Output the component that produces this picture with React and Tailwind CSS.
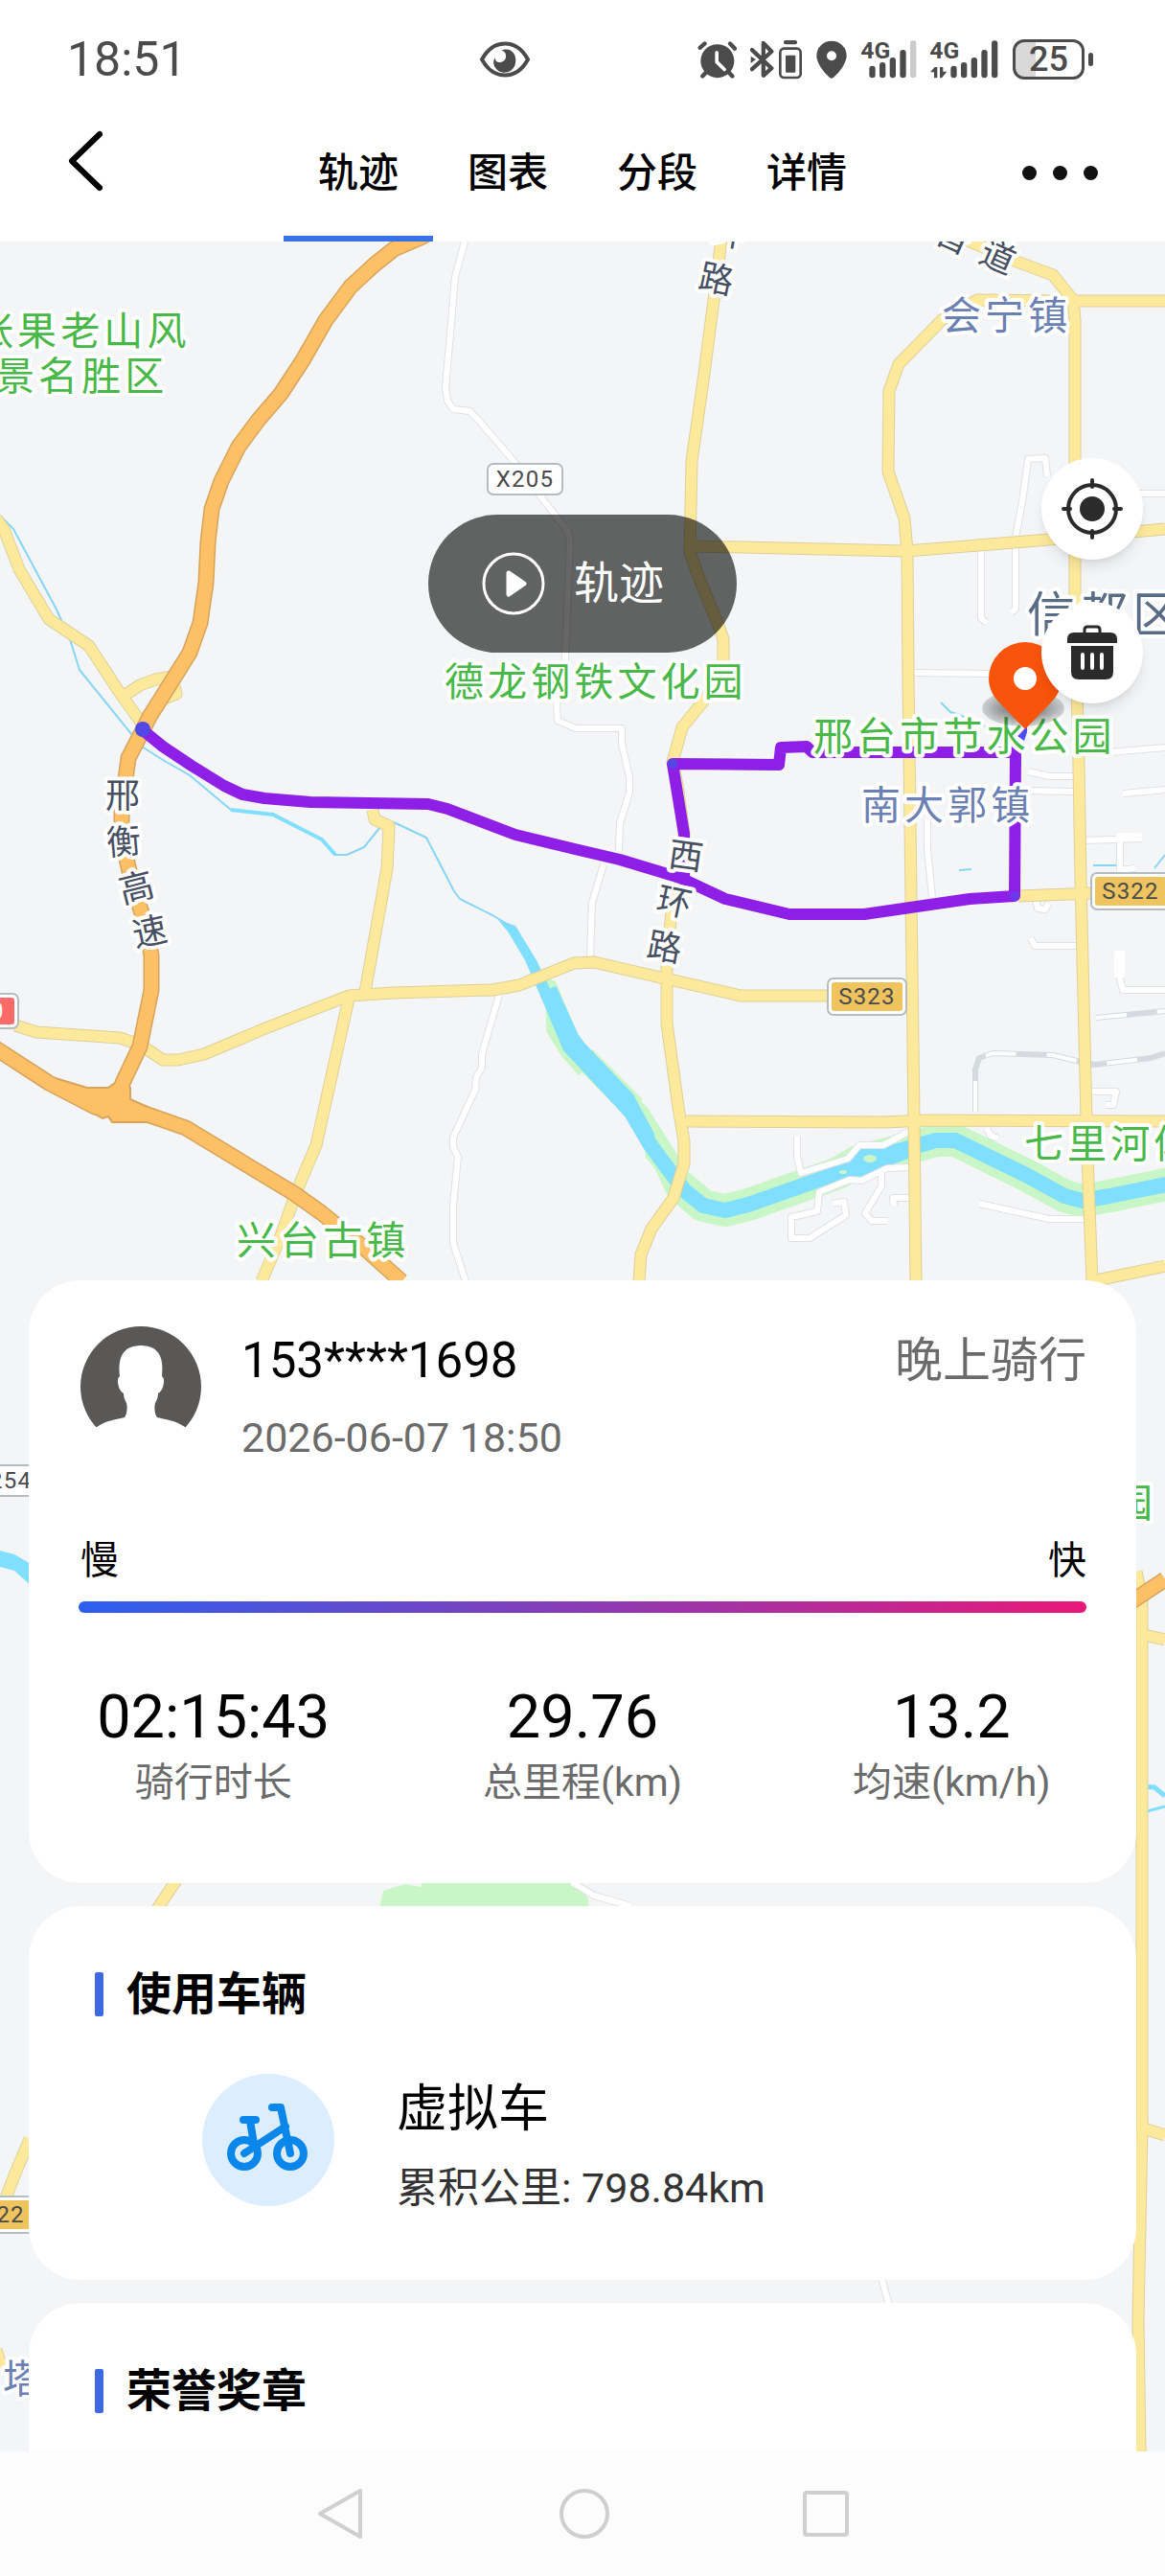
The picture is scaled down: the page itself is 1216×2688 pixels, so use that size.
import React, { useState } from 'react';
import clsx from 'clsx';

const tabs = ['轨迹', '图表', '分段', '详情'];

const stats = [
  { value: '02:15:43', label: '骑行时长' },
  { value: '29.76', label: '总里程(km)' },
  { value: '13.2', label: '均速(km/h)' },
];

// map geometry, all in map units (1216 wide, first visible row is 252)
const streams = [
  '0,538 14,552 59,636 73,667 83,699 138,767',
  '148,779 170,793 198,809 241,845 285,850 336,876 350,892 362,892 380,884 397,863',
  '411,858 445,874 474,930 480,938 514,955 534,967',
  '1141,903 1166,903',
  '1205,906 1216,892',
  '982,733 992,743 1002,746 1028,758',
  '1001,908 1014,907',
];

const lanes = [
  '485,252 475,289 470,348 465,404 467,418 473,427 490,429 500,439 536,481 569,524 593,555 595,566 590,688 581,734 582,752 601,760 649,760 649,776 657,811 657,827 647,859 646,888',
  '630,902 618,942 616,999',
  '521,1038 503,1100 503,1114 497,1124 496,1137 473,1187 473,1197 478,1207 473,1258 473,1297 486,1337',
  '1024,574 1024,645 1030,650',
  '1093,497 1091,478 1073,479 1067,524 1060,560',
  '1060,569 1060,636 1055,639',
  '1189,515 1216,515',
  '954,702 1032,703',
  '1158,785 1216,780',
  '1073,805 1095,810 1122,810',
  '1073,825 1122,826',
  '1172,828 1216,824',
  '1132,877 1191,875',
  '1169,878 1169,908 1185,906',
  '968,855 968,886 973,936',
  '1081,938 1083,948 1091,949 1094,943',
  '1076,979 1080,987 1126,987',
  '1168,997 1168,1017 1172,1033 1216,1033',
  '1138,1139 1165,1139 1162,1153 1154,1153',
  '832,1185 832,1207 836,1224 885,1209 897,1195 922,1195 948,1181',
  '950,1218 926,1219 899,1232 887,1231 855,1244 853,1264 826,1270 826,1292 845,1292 883,1268 881,1254 869,1256',
  '920,1224 920,1238 903,1266 910,1274 926,1274',
  '950,1250 932,1250 933,1258',
  '1022,1256 1095,1272 1134,1272',
  '1030,1177 1034,1185 1042,1188',
  '597,1964 620,1978 659,1989',
  '920,2376 928,2406',
];

const yellowRoads = [
  '-4,541 4,552 20,594 51,646 93,674 123,720 148,755',
  '128,727 146,715 162,709 180,706',
  '172,729 184,724 182,716',
  '16,1070 38,1077 125,1083 146,1090 170,1106 186,1106 213,1100 277,1073 364,1039 411,1036 514,1033 542,1028 599,1005 620,1004 694,1021 773,1039 902,1039',
  '389,845 391,855 406,862 404,906 381,1035',
  '364,1042 330,1195 310,1242 293,1290 273,1337',
  '753,250 745,313 735,390 722,481 720,576 730,604 749,650 755,667 755,699 738,727 712,759 702,795 707,819 714,870 714,914 703,938 696,993 696,1068 708,1155 714,1191 714,1214 703,1250 680,1282 669,1309 667,1337',
  '724,570 946,575 1095,563 1216,552',
  '1107,314 1020,313 983,334 938,380 928,408 927,492 944,541 947,575 948,706 950,859 954,1167 956,1337',
  '1008,250 1056,271 1099,287 1120,313 1122,334 1122,636 1126,800 1128,918 1134,1167 1136,1234 1140,1337',
  '1120,314 1216,314',
  '716,1170 922,1171 970,1169 1216,1170',
  '1063,935 1142,932 1216,932',
  '1138,1337 1154,1334 1216,1321',
  '1186,1640 1192,1667 1192,1950 1192,2220 1188,2420 1190,2560',
  '1194,1706 1216,1711',
  '1194,2221 1216,2228',
  '184,1962 164,1992',
  '31,2232 15,2270 6,2294',
  '-4,2452 2,2470',
];

const highways = [
  '450,242 439,248 411,260 391,276 366,299 340,334 316,376 293,411 269,439 249,466 231,502 221,531 217,566 215,608 209,650 198,681 178,713 156,748 148,764 134,791 127,843 127,874 138,922 152,965 158,997 158,1033 146,1092 128,1130 124,1150',
  '-6,1093 51,1130 99,1155 154,1163 194,1177 308,1246 336,1266 380,1302 419,1337',
  '1180,1672 1216,1648',
];

const rails = [
  '1018,1160 1018,1116 1022,1104 1036,1099 1099,1101 1128,1108 1142,1111 1201,1104 1216,1099',
  '1144,1062 1216,1055',
];

const river =
  '573,1032 597,1084 624,1120 659,1161 679,1195 714,1242 734,1258 757,1263 781,1257 875,1224 895,1212 934,1202 977,1190 997,1190 1071,1226 1111,1248 1130,1253 1158,1248 1222,1235';

const route =
  '148,761 170,779 200,799 234,820 253,829 276,833 324,837 447,839 467,844 538,871 600,886 647,897 710,916 757,938 824,954 902,954 1012,938 1059,935 1060,785 848,785 842,779 815,780 813,798 702,797 714,870 714,916';

const placeLabels = [
  { text: '张果老山风', x: -27, y: 360, color: '#48b848' },
  { text: '景名胜区', x: -5, y: 407, color: '#48b848' },
  { text: '德龙钢铁文化园', x: 464, y: 726, color: '#48b848' },
  { text: '邢台市节水公园', x: 849, y: 783, color: '#48b848' },
  { text: '七里河体', x: 1069, y: 1208, color: '#48b848' },
  { text: '兴台古镇', x: 247, y: 1309, color: '#48b848' },
  { text: '园', x: 1162, y: 1583, color: '#48b848' },
  { text: '会宁镇', x: 983, y: 344, color: '#6b80b3' },
  { text: '南大郭镇', x: 899, y: 855, color: '#6b80b3' },
  { text: '塔', x: 3, y: 2497, color: '#6b80b3' },
];

const roadLabels = [
  { text: '邢', x: 128, y: 829, r: 0 },
  { text: '衡', x: 129, y: 877, r: -5 },
  { text: '高', x: 142, y: 925, r: -14 },
  { text: '速', x: 156, y: 971, r: -12 },
  { text: '西', x: 716, y: 892, r: 8 },
  { text: '环', x: 704, y: 940, r: 12 },
  { text: '路', x: 694, y: 987, r: 10 },
  { text: '环', x: 762, y: 242, r: 10 },
  { text: '路', x: 748, y: 290, r: 12 },
  { text: '道', x: 1042, y: 267, r: 24 },
  { text: '晋', x: 996, y: 246, r: 24 },
];

const Lines = ({ items, color, width }) => (
  <g fill="none" stroke={color} strokeWidth={width} strokeLinejoin="round">
    {items.map(p => <polyline key={p} points={p} />)}
  </g>
);

const Shield = ({ x, y, w, h, text, fill }) => (
  <g>
    <rect x={x} y={y} width={w} height={h} rx="6" fill="#fff" stroke="#b4bcc0" strokeWidth="2" />
    {fill && <rect x={x + 4} y={y + 4} width={w - 8} height={h - 8} rx="3" fill={fill} />}
    <text x={x + w / 2} y={y + h / 2 + 8} textAnchor="middle" className="text-2xl tracking-wider" fill="#494a4c">
      {text}
    </text>
  </g>
);

const TrackMap = () => (
  <svg
    className="absolute inset-0 h-full w-full"
    viewBox="0 252 1216 2306"
    preserveAspectRatio="xMidYMin slice"
    role="img"
    aria-label="骑行轨迹地图"
  >
    <rect x="0" y="252" width="1216" height="2306" fill="#f3f5f6" />
    <polygon points="400,1973 423,1966 440,1969 440,1960 596,1960 614,1981 614,1995 395,1995" fill="#c8f6c6" />

    {/* river banks, then the water itself */}
    <polygon points="570,1020 580,1024 604,1082 624,1108 604,1122 586,1102 570,1076" fill="#c8f6c6" />
    <polyline points="610,1104 662,1156" fill="none" stroke="#c8f6c6" strokeWidth="25" />
    <polygon points="660,1140 676,1156 714,1216 714,1262 696,1246 684,1220 674,1208 672,1192" fill="#c8f6c6" />
    <polyline points="708,1236 734,1258 757,1263 781,1257 875,1224 895,1212 934,1202 977,1190 997,1190 1071,1226 1111,1248 1130,1253 1158,1248 1222,1235" fill="none" stroke="#c8f6c6" strokeWidth="34" strokeLinejoin="round" />
    <polyline points={river} fill="none" stroke="#80dfff" strokeWidth="16" strokeLinejoin="round" />
    <polygon points="520,960 538,966 560,1002 584,1052 604,1082 661,1142 684,1185 668,1180 640,1152 588,1096 566,1044 548,1002 530,972" fill="#80dfff" />
    <polygon points="895,1196 934,1199 950,1188 950,1208 899,1228 875,1228 879,1216" fill="#80dfff" />
    <ellipse cx="908" cy="1209" rx="7" ry="4" fill="#c8f6c6" />
    <ellipse cx="880" cy="1223" rx="4" ry="2" fill="#c8f6c6" />
    <polygon points="0,1618 15,1622 34,1633 34,1656 15,1639 0,1635" fill="#80dfff" />
    <Lines items={streams} color="#86d6f5" width={2} />
    <polyline points="241,845 285,850 336,876 350,892" fill="none" stroke="#80dfff" strokeWidth="4" />
    <polyline points="1190,1864 1205,1865 1216,1874" fill="none" stroke="#80dfff" strokeWidth="5" />
    <polyline points="1190,1892 1216,1885" fill="none" stroke="#80dfff" strokeWidth="3" />

    <Lines items={lanes} color="#dfe1e6" width={8} />
    <Lines items={lanes} color="#ffffff" width={6} />
    <rect x="1163" y="992" width="11" height="28" rx="2" fill="#fff" />
    <rect x="1165" y="869" width="27" height="9" rx="2" fill="#fff" />
    <Lines items={rails} color="#d5d9e0" width={6} />
    <g fill="none" stroke="#fff" strokeWidth="4" strokeDasharray="32 32">
      {rails.map(p => <polyline key={p} points={p} />)}
    </g>

    <Lines items={yellowRoads} color="#ddd09a" width={13} />
    <Lines items={yellowRoads} color="#fde99c" width={11} />
    <Lines items={highways} color="#d6a45c" width={17} />
    <polygon
      points="51,1123 91,1135 113,1135 124,1127 136,1135 136,1147 154,1155 194,1171 194,1183 154,1171 117,1171 113,1165 107,1167 51,1135"
      fill="#fdc066"
      stroke="#d6a45c"
      strokeWidth="2"
    />
    <Lines items={highways} color="#fdc066" width={14} />

    <polyline points={route} fill="none" stroke="#8d1fe6" strokeWidth="12" strokeLinejoin="round" />
    <path d="M1062 766 L1072 758 L1072 764 L1069 773 L1062 768 Z" fill="#4b4df0" />
    <circle cx="149" cy="761" r="8" fill="#5347e6" />
    <circle cx="702" cy="797" r="5" fill="#5347e6" />
    <circle cx="1059" cy="935" r="5" fill="#6a3aea" />

    <Shield x={509} y={484} w={78} h={32} text="X205" />
    <Shield x={864} y={1021} w={82} h={38} text="S323" fill="#efc45f" />
    <Shield x={1139} y={911} w={82} h={38} text="S322" fill="#efc45f" />
    <Shield x={-62} y={1037} w={81} h={36} text="" fill="#fd6a6a" />
    <text x="-10" y="1063" fill="#fff" className="text-2xl">0</text>
    <Shield x={-38} y={1529} w={82} h={32} text="X254" />
    <Shield x={-45} y={2292} w={82} h={38} text="S322" fill="#efc45f" />

    <g stroke="#fff" strokeWidth="8" strokeLinejoin="round" style={{ paintOrder: 'stroke' }}>
      {placeLabels.map(l => (
        <text key={l.text} x={l.x} y={l.y} fill={l.color} className="text-[41px] tracking-widest">{l.text}</text>
      ))}
      <text x="1072" y="659" fill="#586c86" className="text-[50px] tracking-widest">信都区</text>
      {roadLabels.map((l, i) => (
        <text
          key={i}
          transform={`translate(${l.x} ${l.y}) rotate(${l.r})`}
          y="14"
          textAnchor="middle"
          fill="#475063"
          className="text-[36px]"
        >
          {l.text}
        </text>
      ))}
    </g>

    {/* end marker */}
    <defs>
      <radialGradient id="pinShadow">
        <stop offset="0.5" stopColor="#000" stopOpacity="0.4" />
        <stop offset="1" stopColor="#000" stopOpacity="0.15" />
      </radialGradient>
    </defs>
    <ellipse cx="1068" cy="739" rx="43" ry="19" fill="url(#pinShadow)" />
    <path d="M1070 761 L1043 733 C1036 726 1032 717 1032 708 A38 38 0 0 1 1108 708 C1108 717 1104 726 1097 733 Z" fill="#f9540b" />
    <circle cx="1070" cy="708" r="12" fill="#fff" />
  </svg>
);

const bars = [
  { x: 0, y: 80 },
  { x: 32, y: 69 },
  { x: 64, y: 54 },
  { x: 96, y: 30 },
  { x: 128, y: 1 },
];

const Signal = ({ data }) => (
  <svg
    className={clsx('h-[42px] overflow-visible', data ? 'w-[72px]' : 'w-[58px]')}
    viewBox={data ? '0 -3 216 126' : '0 -3 174 126'}
    fill="currentColor"
  >
    <text x="-2" y="57" className="text-[74px] font-bold">4G</text>
    {data && <path d="M0 100 L14 84 H22 V118 H12 V100 Z M30 84 H40 V98 L52 98 L36 118 H30 Z" />}
    {bars.map((b, i) => (
      <rect
        key={i}
        x={b.x + (data ? 64 : 25)}
        y={b.y}
        width="19"
        height={118 - b.y}
        rx="9"
        fill={!data && i === 4 ? '#cbcbcb' : 'currentColor'}
      />
    ))}
  </svg>
);

const StatusBar = () => (
  <div className="flex h-[120px] items-center justify-between pt-1 pr-[75px] pl-[70px] text-[#4b4b4b]">
    <div className="flex w-[484px] items-center justify-between">
      <span className="text-[50px] leading-none">18:51</span>
      <svg className="h-[38px] w-[54px]" viewBox="0 0 54 38" fill="none">
        <path d="M3 19 C15 -3 39 -3 51 19 C39 41 15 41 3 19 Z" stroke="currentColor" strokeWidth="4" />
        <path d="M23 10 C33 5 40 14 38 23 C36 32 28 34 22 32 C16 29 13 22 17 17 C16 25 29 23 28 15 C28 12 26 10 23 10 Z" fill="currentColor" />
      </svg>
    </div>
    <div className="flex items-center justify-end">
      <svg className="mr-[14px] h-[42px] w-[41px]" viewBox="140 59 124 126" fill="none" stroke="currentColor" strokeWidth="13" strokeLinecap="round">
        <circle cx="203" cy="127" r="53" fill="currentColor" stroke="none" />
        <path d="M148 85 L163 72 M243 72 L258 88 M170 160 L156 175 M236 160 L250 175" />
        <path d="M201 100 V130 L225 154" stroke="#fff" strokeWidth="11" />
      </svg>
      <svg className="mr-[5px] h-[42px] w-[25px]" viewBox="310 59 76 126" fill="none" stroke="currentColor" strokeWidth="13" strokeLinecap="round" strokeLinejoin="round">
        <path d="M316 153 L378 97 L352 70 V173 L378 150 L316 92" />
        <path d="M312 112 L328 122 L312 134 Z" fill="currentColor" stroke="none" />
      </svg>
      <svg className="mr-[15px] h-[42px] w-[24px]" viewBox="399 59 72 126" fill="currentColor">
        <rect x="414" y="62" width="42" height="13" rx="6" />
        <rect x="403" y="88" width="64" height="91" rx="12" fill="none" stroke="currentColor" strokeWidth="8" />
        <rect x="420" y="109" width="31" height="54" rx="3" />
      </svg>
      <svg className="mr-[15px] h-[42px] w-[32px]" viewBox="518 59 96 126" fill="currentColor">
        <path fillRule="evenodd" d="M566 182 C556 178 519 140 519 110 A47 46 0 0 1 613 110 C613 140 576 178 566 182 Z M581 111 A15 15 0 1 0 551 111 A15 15 0 1 0 581 111 Z" />
      </svg>
      <span className="mr-[14px]"><Signal /></span>
      <span className="mr-[14px]"><Signal data /></span>
      <div className="flex items-center gap-1">
        <span className="h-[42px] w-[75px] rounded-[12px] border-[3px] border-[#4b4b4b] bg-linear-to-r from-[#d8d8d8] from-30% to-white to-30% text-center text-[36px] leading-9 font-medium">
          25
        </span>
        <span className="h-[14px] w-[5px] rounded-full bg-[#4b4b4b]" />
      </div>
    </div>
  </div>
);

const SectionTitle = ({ children }) => (
  <h2 className="flex items-center gap-[24px] pl-[69px] text-[47px] leading-[46px] font-bold">
    <span className="h-[46px] w-[9px] rounded-xs bg-[#3d6ae0]" />
    {children}
  </h2>
);

const App = () => {
  const [activeTab, setActiveTab] = useState('轨迹');

  return (
    <div className="flex min-h-screen flex-col bg-white font-[Roboto,'Noto_Sans_CJK_SC',sans-serif] text-black">
      <header>
        <StatusBar />
        <nav className="flex h-[132px] items-stretch justify-between px-[70px]">
          <button aria-label="返回" className="flex flex-1 items-start pt-[14px]">
            <svg className="h-[68px] w-[40px]" viewBox="0 0 40 68" fill="none" stroke="#000" strokeWidth="6" strokeLinecap="round" strokeLinejoin="round">
              <path d="M34 6 L5 34 L34 62" />
            </svg>
          </button>
          <div className="flex">
            {tabs.map(tab => (
              <button
                key={tab}
                onClick={() => setActiveTab(tab)}
                className={clsx(
                  'w-[156px] border-b-6 pb-1 text-[42px] leading-[116px] font-medium',
                  activeTab === tab ? 'border-[#3872e6]' : 'border-transparent'
                )}
              >
                {tab}
              </button>
            ))}
          </div>
          <button aria-label="更多" className="flex flex-1 items-center justify-end gap-[17px] pb-[12px]">
            <span className="size-[15px] rounded-full bg-[#111]" />
            <span className="size-[15px] rounded-full bg-[#111]" />
            <span className="size-[15px] rounded-full bg-[#111]" />
          </button>
        </nav>
      </header>

      <main className="relative flex-1 overflow-hidden">
        <TrackMap />

        <div className="absolute top-[285px] flex w-full justify-center">
          <button className="flex h-[144px] w-[322px] items-center justify-center gap-[30px] rounded-full bg-black/60 pr-5 text-[47px] text-white">
            <svg className="size-[66px]" viewBox="0 0 66 66" fill="none" stroke="#fff" strokeWidth="3">
              <circle cx="33" cy="33" r="31" />
              <path d="M28 22 L44 33 L28 44 Z" fill="#fff" strokeWidth="5" strokeLinejoin="round" />
            </svg>
            轨迹
          </button>
        </div>

        <div className="absolute top-[226px] right-[23px] flex flex-col gap-11">
          <button aria-label="定位" className="flex size-[106px] items-center justify-center rounded-full bg-white shadow-lg">
            <svg className="size-[66px]" viewBox="0 0 66 66" fill="none" stroke="#2b2b2b" strokeWidth="4" strokeLinecap="round">
              <circle cx="33" cy="33" r="25" />
              <circle cx="33" cy="33" r="13" fill="#2b2b2b" stroke="none" />
              <path d="M33 3 V10 M33 56 V63 M3 33 H10 M56 33 H63" />
            </svg>
          </button>
          <button aria-label="删除" className="flex size-[106px] items-center justify-center rounded-full bg-white shadow-lg">
            <svg className="h-[58px] w-[52px]" viewBox="0 0 52 58" fill="#2b2b2b">
              <path d="M18 9 V5 Q18 2 21 2 H31 Q34 2 34 5 V9" fill="none" stroke="#2b2b2b" strokeWidth="3" />
              <path d="M0 19 V15 Q0 8 7 8 H45 Q52 8 52 15 V19 Z" />
              <path d="M4 22 H48 V49 Q48 57 40 57 H12 Q4 57 4 49 Z" />
              <path d="M16 31 V45 M26 31 V45 M36 31 V45" stroke="#fff" strokeWidth="4" strokeLinecap="round" />
            </svg>
          </button>
        </div>

        <div className="relative flex flex-col gap-6 px-[30px] pt-[1084px]">
          <section className="rounded-[54px] bg-white pt-12 pb-[77px]">
            <div className="px-[52px]">
              <div className="flex items-start pl-0.5">
                <svg className="h-[126px] w-[126px]" viewBox="0 0 126 126" role="img" aria-label="头像">
                  <circle cx="63" cy="63" r="63" fill="#595856" />
                  <path
                    d="M0 126 V120 L17 105 C27 98 38 97 46 95 C49 91 49 83 48 80 C46 77 45 73 45 70 C41 68 39 62 39 57 C39 54 40 53 41 52 C39 34 43 20 63 20 C83 20 87 34 85 52 C86 53 87 54 87 57 C87 62 85 68 81 70 C81 73 80 77 78 80 C77 83 77 91 80 95 C88 97 99 98 109 105 L126 120 V126 Z"
                    fill="#fff"
                  />
                </svg>
                <div className="ml-[42px] flex-1">
                  <p className="text-[51px] leading-[72px]">153****1698</p>
                  <p className="mt-2 text-[43px] leading-[72px] text-[#6b6b6b]">2026-06-07 18:50</p>
                </div>
                <p className="text-[50px] leading-[72px] text-[#6b6b6b]">晚上骑行</p>
              </div>
              <div className="mt-[63px] flex justify-between pl-0.5 text-[40px] leading-[60px]">
                <span>慢</span>
                <span>快</span>
              </div>
              <div className="mt-3 h-3 rounded-full bg-linear-to-r/srgb from-[#2b5ff0] to-[#e91878]" />
            </div>
            <dl className="mt-[69px] grid grid-cols-3 text-center">
              {stats.map(s => (
                <div key={s.label} className="flex flex-col-reverse">
                  <dt className="text-[41px] leading-[56px] text-[#6b6b6b]">{s.label}</dt>
                  <dd className="text-[63px] leading-[80px]">{s.value}</dd>
                </div>
              ))}
            </dl>
          </section>

          <section className="rounded-[54px] bg-white pt-[69px] pb-[55px]">
            <SectionTitle>使用车辆</SectionTitle>
            <div className="mt-14 flex gap-[65px] pl-[181px]">
              <svg className="mt-1 size-[138px] rounded-full bg-[#dceefd]" viewBox="0 0 138 138" fill="none" stroke="#0b86ea" strokeWidth="8" strokeLinecap="round" strokeLinejoin="round">
                <circle cx="44" cy="83" r="14" />
                <circle cx="92" cy="83" r="14" />
                <path d="M43 48 H56 M50 49 L54 73 M44 83 L87 55 M73 35 H82 L92 83" />
              </svg>
              <div className="leading-[82px]">
                <p className="text-[53px]">虚拟车</p>
                <p className="text-[43px] text-[#333]">累积公里: 798.84km</p>
              </div>
            </div>
          </section>

          <section className="rounded-t-[54px] bg-white pt-[69px] pb-10">
            <SectionTitle>荣誉奖章</SectionTitle>
          </section>
        </div>
      </main>

      <footer className="flex h-[130px] items-center justify-center gap-[202px] bg-[#fcfcfc]">
        <button aria-label="后退">
          <svg className="size-[52px]" viewBox="0 0 52 52" fill="none" stroke="#cfcfcf" strokeWidth="4" strokeLinejoin="round">
            <path d="M4 26 L46 2 V50 Z" />
          </svg>
        </button>
        <button aria-label="主页">
          <span className="block size-[52px] rounded-full border-4 border-[#cfcfcf]" />
        </button>
        <button aria-label="最近任务">
          <span className="block size-[48px] rounded-sm border-4 border-[#cfcfcf]" />
        </button>
      </footer>
    </div>
  );
};

export default App;
